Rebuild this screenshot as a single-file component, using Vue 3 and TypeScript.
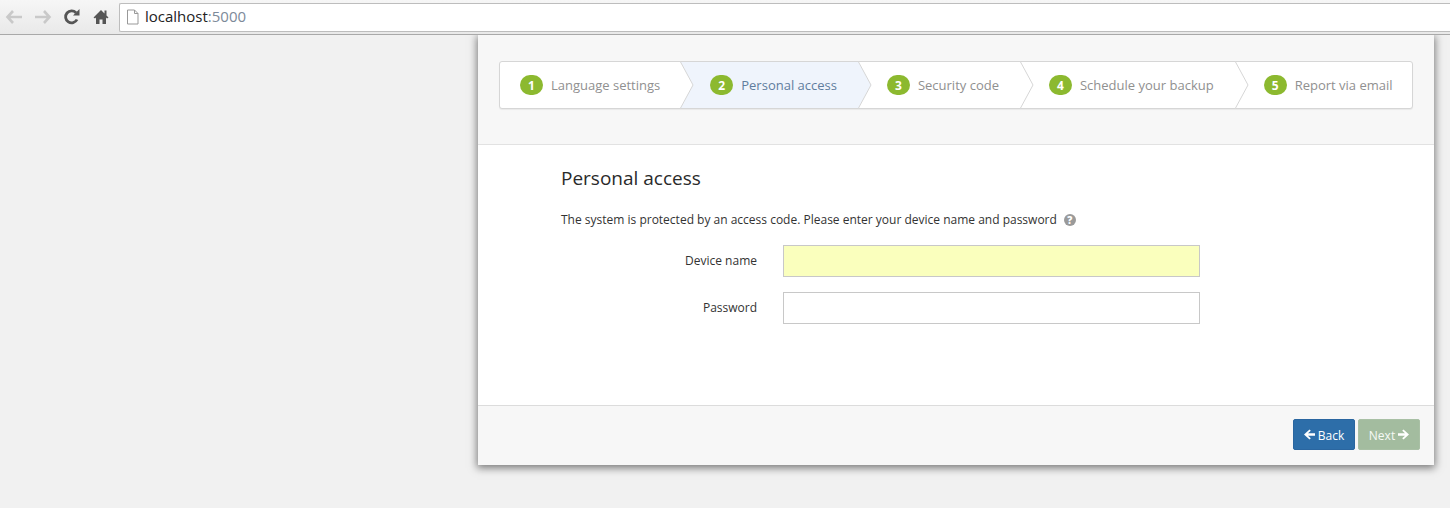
<template>
  <div class="page">
    <header class="toolbar">
      <svg class="nav-icon" width="18" height="16" viewBox="0 0 18 16"><path d="M8 2 2.500 8 8 14M3 8h14" fill="none" stroke="#c9c9c9" stroke-width="2.600" /></svg>
      <svg class="nav-icon" width="18" height="16" viewBox="0 0 18 16"><path d="M10 2l5.500 6L10 14M15 8H1" fill="none" stroke="#c9c9c9" stroke-width="2.600" /></svg>
      <svg class="nav-icon" width="18" height="18" viewBox="0 0 18 18"><path d="M14 11.500A6 6 0 1 1 13 4.800" fill="none" stroke="#555" stroke-width="2.800" /><path d="M10 7.500h6.500V1z" fill="#555" /></svg>
      <svg class="nav-icon" width="18" height="18" viewBox="0 0 18 18"><path d="M9 2 1.500 9.500 3 10.500l1-1V16h3.500v-4.500h3V16H14V9.500l1 1 1.500-1L14.500 7.500V2.500h-2v3z" fill="#555" /></svg>
      <div class="address">
        <svg width="13" height="16" viewBox="0 0 13 16"><path d="M1.500 1h7l3.500 3.500v10.500h-10.500zM8.500 1v3.500h3.500" fill="#fff" stroke="#999" /></svg>
        <span class="host">localhost<span class="port">:5000</span></span>
      </div>
    </header>

    <main class="wizard">
      <section class="wizard-top">
        <ol class="steps">
          <li v-for="(step, i) in steps" :key="step" class="step" :class="{ active: i === current }">
            <span class="badge">{{ i + 1 }}</span>
            <span>{{ step }}</span>
            <svg v-if="i < steps.length - 1" class="chevron" width="14" height="48" viewBox="0 0 14 48">
              <path d="M0 0 13 24 0 48z" :fill="i === current ? '#eff4fc' : '#fff'" />
              <path d="M0 0 13 24 0 48" fill="none" stroke="#d6d6d6" />
            </svg>
          </li>
        </ol>
      </section>

      <section class="wizard-body">
        <h2>Personal access</h2>
        <p class="intro">
          The system is protected by an access code. Please enter your device name and password
          <span class="help">?</span>
        </p>
        <form class="fields" @submit.prevent>
          <label class="field">
            <span>Device name</span>
            <input class="autofill" type="text" />
          </label>
          <label class="field">
            <span>Password</span>
            <input type="password" />
          </label>
        </form>
      </section>

      <footer class="wizard-foot">
        <button class="btn back" type="button">
          <svg width="11" height="11" viewBox="0 0 11 11"><path d="M5.500.500 0 5.500l5.500 5 1.300-1.300L4 6.700h7V4.300H4l2.800-2.500z" fill="#fff" /></svg>
          <span>Back</span>
        </button>
        <button class="btn next" type="button" disabled>
          <span>Next</span>
          <svg width="11" height="11" viewBox="0 0 11 11"><path d="M5.500.500l5.500 5-5.500 5-1.300-1.300L7 6.700H0V4.300h7L4.200 1.800z" fill="#fff" /></svg>
        </button>
      </footer>
    </main>
  </div>
</template>

<script setup lang="ts">
const steps: string[] = [
  'Language settings',
  'Personal access',
  'Security code',
  'Schedule your backup',
  'Report via email',
]
const current = 1
</script>

<style>
body {
  background: #f1f1f1;
}
</style>

<style scoped>
.page {
  height: 508px;
  overflow: hidden;
  background: #f1f1f1;
  font-family: "Open Sans", "Liberation Sans", sans-serif;
}
.toolbar {
  display: flex;
  align-items: center;
  gap: 11px;
  height: 34px;
  padding-left: 5px;
  background: linear-gradient(#f6f6f6, #e9e9e9);
  border-bottom: 1px solid #a9a9a9;
}
.address {
  flex: 1;
  display: flex;
  align-items: center;
  gap: 6px;
  height: 27px;
  margin-left: -2px;
  padding-left: 6px;
  background: #fff;
  border: 1px solid #bdbdbd;
  border-right: none;
  border-radius: 2px 0 0 2px;
}
.host {
  margin-top: -2px;
  font-size: 15px;
  color: #222;
}
.port {
  color: #7d8a99;
}
.wizard {
  position: relative;
  width: 956px;
  margin-left: 478px;
  background: #fff;
  box-shadow: 0 2px 8px 1px rgba(0, 0, 0, 0.5);
  clip-path: inset(0 -20px -20px -20px);
}
.wizard-top {
  height: 110px;
  box-sizing: border-box;
  padding: 26px 21px 0;
  background: #f7f7f7;
  border-bottom: 1px solid #e2e2e2;
}
.steps {
  display: flex;
  list-style: none;
  width: 914px;
  height: 48px;
  box-sizing: border-box;
  margin: 0;
  padding: 0;
  background: #fff;
  border: 1px solid #d6d6d6;
  border-radius: 3px;
  box-shadow: 0 1px 1px rgba(0, 0, 0, 0.06);
}
.step {
  position: relative;
  display: flex;
  align-items: center;
  gap: 8px;
  height: 46px;
  padding: 0 21px 0 29px;
  font-size: 13px;
  color: #909090;
  white-space: nowrap;
}
.step:first-child {
  padding: 0 20px;
}
.step.active {
  padding-left: 30px;
  background: #eff4fc;
  color: #5f7d9e;
}
.badge {
  display: flex;
  align-items: center;
  justify-content: center;
  width: 23px;
  height: 20px;
  border-radius: 10px;
  background: #8cb92f;
  color: #fff;
  font-size: 12px;
  font-weight: 700;
}
.chevron {
  position: absolute;
  top: -1px;
  left: 100%;
  z-index: 1;
}
.wizard-body {
  height: 260px;
  box-sizing: border-box;
  padding: 20px 0 0 83px;
  color: #333;
}
h2 {
  margin: 0;
  font-size: 19px;
  font-weight: 500;
  line-height: 27px;
  color: #2a2a2a;
}
.intro {
  display: flex;
  align-items: center;
  gap: 7px;
  margin: 19px 0 0;
  font-size: 12px;
  line-height: 18px;
}
.help {
  display: inline-flex;
  align-items: center;
  justify-content: center;
  width: 12px;
  height: 12px;
  border-radius: 50%;
  background: #9a9a9a;
  color: #fff;
  font-size: 10px;
  font-weight: 800;
}
.fields {
  display: flex;
  flex-direction: column;
  gap: 15px;
  margin-top: 16px;
}
.field {
  display: flex;
  align-items: center;
  gap: 26px;
  font-size: 12px;
}
.field span {
  width: 196px;
  padding-bottom: 2px;
  text-align: right;
}
.field input {
  width: 417px;
  height: 32px;
  box-sizing: border-box;
  background: #fff;
  border: 1px solid #c8c8c8;
  outline: none;
}
.field input.autofill {
  background: #faffbd;
}
.wizard-foot {
  display: flex;
  justify-content: flex-end;
  gap: 3px;
  height: 60px;
  box-sizing: border-box;
  padding: 13px 14px 0 0;
  background: #f7f7f7;
  border-top: 1px solid #dcdcdc;
}
.btn {
  display: flex;
  align-items: center;
  justify-content: center;
  gap: 3px;
  width: 62px;
  height: 31px;
  padding: 0;
  border: 1px solid transparent;
  border-radius: 2px;
  color: #fff;
  font-family: inherit;
  font-size: 12px;
}
.btn span {
  padding-top: 1px;
}
.back {
  background: #2d6ea9;
  border-color: #2a66a0;
}
.next {
  background: #a3bc9f;
  border-color: #a9c0a5;
  color: #f6f9f5;
}
</style>
